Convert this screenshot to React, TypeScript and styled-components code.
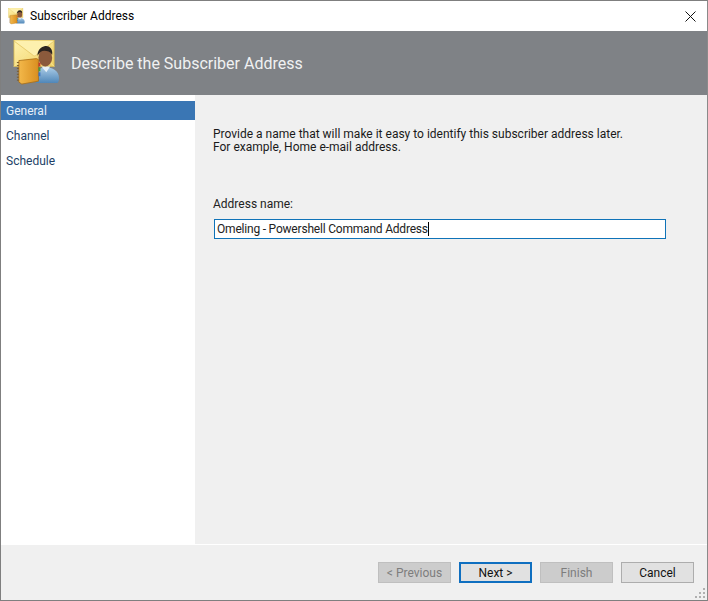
import React from "react";
import styled, { createGlobalStyle } from "styled-components";

const Global = createGlobalStyle`
  html, body { margin: 0; padding: 0; background: #fff; }
  body { font-family: Roboto, "Open Sans", sans-serif; font-size: 12px; color: #111; }
`;

const Window = styled.div`
  box-sizing: border-box;
  width: 708px;
  height: 601px;
  border: 1px solid #7f7f7f;
  border-right-color: #8a8a8a;
  display: flex;
  flex-direction: column;
  background: #fff;
  overflow: hidden;
`;

const TitleBar = styled.div`
  height: 30px;
  flex: none;
  display: flex;
  align-items: center;
  padding-left: 7px;
  gap: 5px;
  background: #fff;
`;

const TitleText = styled.span`
  flex: 1;
  font-size: 12px;
  color: #000;
`;

const CloseButton = styled.div`
  width: 32px;
  height: 30px;
  margin-right: 1px;
  display: flex;
  align-items: center;
  justify-content: center;
`;

const Banner = styled.div`
  height: 64px;
  flex: none;
  background: #7f8286;
  display: flex;
  align-items: center;
  padding-left: 12px;
  gap: 11px;
`;

const BannerTitle = styled.h1`
  margin: 0;
  font-size: 16px;
  font-weight: 400;
  color: #f0f1f2;
`;

const Body = styled.div`
  flex: 1;
  display: flex;
  min-height: 0;
`;

const Nav = styled.nav`
  width: 194px;
  flex: none;
  padding-top: 6px;
  background: #fff;
  display: flex;
  flex-direction: column;
`;

const NavItem = styled.div<{ $active?: boolean }>`
  height: 19px;
  margin-bottom: 6px;
  padding-left: 5px;
  display: flex;
  align-items: center;
  background: ${(p) => (p.$active ? "#3a76b4" : "transparent")};
  color: ${(p) => (p.$active ? "#e8f0f8" : "#1d3f66")};
`;

const Content = styled.main`
  flex: 1;
  background: #f0f0f0;
  padding: 33px 42px 0 18px;
  display: flex;
  flex-direction: column;
`;

const Intro = styled.p`
  margin: 0;
  line-height: 13px;
  color: #1a1a1a;
`;

const FieldLabel = styled.label`
  margin-top: 43px;
  line-height: 14px;
  color: #222;
`;

const NameField = styled.div`
  box-sizing: border-box;
  margin-top: 8px;
  margin-left: 1px;
  height: 20px;
  width: 452px;
  border: 1px solid #0f73b8;
  background: #fff;
  display: flex;
  align-items: center;
  padding-left: 2px;
  color: #222;
  letter-spacing: -0.2px;
`;

const Caret = styled.span`
  width: 1px;
  height: 14px;
  background: #000;
`;

const Footer = styled.footer`
  height: 56px;
  flex: none;
  box-sizing: border-box;
  background: #f0f0f0;
  border-top: 1px solid #fff;
  display: flex;
  justify-content: flex-end;
  align-items: flex-start;
  gap: 8px;
  padding: 17px 13px 0 0;
  position: relative;
`;

const DialogButton = styled.div<{ $kind?: "disabled" | "primary" }>`
  box-sizing: border-box;
  width: 73px;
  height: 21px;
  display: flex;
  align-items: center;
  justify-content: center;
  border: ${(p) =>
    p.$kind === "primary"
      ? "2px solid #0f6fc0"
      : p.$kind === "disabled"
      ? "1px solid #bfbfbf"
      : "1px solid #adadad"};
  background: ${(p) => (p.$kind === "disabled" ? "#cccccc" : "#e1e1e1")};
  color: ${(p) => (p.$kind === "disabled" ? "#7d7d7d" : "#111")};
`;

const Grip = styled.svg`
  position: absolute;
  right: 1px;
  bottom: 1px;
`;

const SubscriberIcon = ({ size }: { size: number }) => (
  <svg width={size} height={size} viewBox="0 0 48 48">
    <defs>
      <linearGradient id={`env${size}`} x1="0" y1="0" x2="1" y2="1">
        <stop offset="0" stopColor="#fff3b0" />
        <stop offset="1" stopColor="#f0cf62" />
      </linearGradient>
      <linearGradient id={`book${size}`} x1="0" y1="0" x2="1" y2="0">
        <stop offset="0" stopColor="#f3b84a" />
        <stop offset="1" stopColor="#d98f20" />
      </linearGradient>
      <linearGradient id={`body${size}`} x1="0" y1="0" x2="0" y2="1">
        <stop offset="0" stopColor="#a9cbe6" />
        <stop offset="1" stopColor="#4f86b8" />
      </linearGradient>
    </defs>
    <path d="M1 0h41v27H1z" fill={`url(#env${size})`} stroke="#d9b84e" strokeWidth=".8" />
    <path d="M1 1l20 15a2 2 0 0 0 2 0L42 1" fill="#fdf0ae" stroke="#e6cb6c" strokeWidth="1" />
    <path d="M1 27l14-14M42 27L29 14" stroke="#f6e598" strokeWidth="1" fill="none" />
    <path d="M24 44c-2-4-3-8-1-11 3-4 7-5 11-5 6 0 13 3 13 11 0 3-1 5-2 5z" fill={`url(#body${size})`} />
    <path d="M29 27l5 6 4-6z" fill="#e8f1f8" />
    <ellipse cx="33" cy="18" rx="7" ry="9" fill="#8b5a3c" />
    <path d="M25 16c0-8 6-10 9-10s7 3 6 9c-2-3-5-4-8-4s-5 2-7 5z" fill="#2a2320" />
    <path d="M6 21l18-2 2 1v22l-17 3-3-2z" fill={`url(#book${size})`} stroke="#a86d14" strokeWidth=".8" />
    <path d="M6 23h-2M6 26h-2M6 29h-2M6 32h-2M6 35h-2M6 38h-2M6 41h-2" stroke="#7a5a2a" strokeWidth="1" />
    <path d="M26 23h2v4h-2z" fill="#c73a2b" />
    <path d="M26 28h2v4h-2z" fill="#4a9a3a" />
    <path d="M26 33h2v4h-2z" fill="#3f74c0" />
  </svg>
);

export default function App() {
  return (
    <>
      <Global />
      <Window>
        <TitleBar>
          <SubscriberIcon size={17} />
          <TitleText>Subscriber Address</TitleText>
          <CloseButton>
            <svg width="11" height="11" viewBox="0 0 11 11">
              <path d="M0.5 0.5l10 10M10.5 0.5l-10 10" stroke="#111" strokeWidth="1" fill="none" />
            </svg>
          </CloseButton>
        </TitleBar>
        <Banner>
          <SubscriberIcon size={47} />
          <BannerTitle>Describe the Subscriber Address</BannerTitle>
        </Banner>
        <Body>
          <Nav>
            <NavItem $active>General</NavItem>
            <NavItem>Channel</NavItem>
            <NavItem>Schedule</NavItem>
          </Nav>
          <Content>
            <Intro>
              Provide a name that will make it easy to identify this subscriber address later.
              <br />
              For example, Home e-mail address.
            </Intro>
            <FieldLabel>Address name:</FieldLabel>
            <NameField>
              Omeling - Powershell Command Address
              <Caret />
            </NameField>
          </Content>
        </Body>
        <Footer>
          <DialogButton $kind="disabled">&lt; Previous</DialogButton>
          <DialogButton $kind="primary">Next &gt;</DialogButton>
          <DialogButton $kind="disabled">Finish</DialogButton>
          <DialogButton>Cancel</DialogButton>
          <Grip width="12" height="12" viewBox="0 0 12 12">
            <g fill="#b0b0b0">
              <rect x="9" y="1" width="2" height="2" />
              <rect x="5" y="5" width="2" height="2" />
              <rect x="9" y="5" width="2" height="2" />
              <rect x="1" y="9" width="2" height="2" />
              <rect x="5" y="9" width="2" height="2" />
              <rect x="9" y="9" width="2" height="2" />
            </g>
          </Grip>
        </Footer>
      </Window>
    </>
  );
}
